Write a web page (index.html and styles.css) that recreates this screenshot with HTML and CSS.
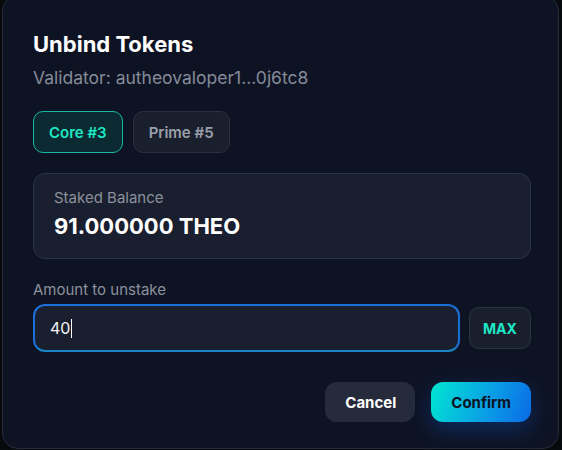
FILE: index.html
```html
<!DOCTYPE html>
<html lang="en">
<head>
    <meta charset="UTF-8">
    <meta name="viewport" content="width=device-width, initial-scale=1.0">
    <title>Unbind Tokens</title>
    <link rel="stylesheet" href="styles.css">
</head>
<body>
    <div class="modal">
        <h2 class="modal-title">Unbind Tokens</h2>
        <div class="modal-subtitle">Validator: autheovaloper1...0j6tc8</div>

        <div class="tabs">
            <button class="tab active">Core #3</button>
            <button class="tab">Prime #5</button>
        </div>

        <div class="balance-box">
            <div class="balance-label">Staked Balance</div>
            <div class="balance-value">91.000000 THEO</div>
        </div>

        <label class="field-label" for="amount">Amount to unstake</label>
        <div class="amount-row">
            <div class="amount-input">
                <span class="amount-text">40</span><span class="caret"></span>
            </div>
            <button class="max-btn">MAX</button>
        </div>

        <div class="actions">
            <button class="btn btn-cancel">Cancel</button>
            <button class="btn btn-confirm">Confirm</button>
        </div>
    </div>
</body>
</html>
```

FILE: styles.css
```css
body {
    margin: 0;
    height: 450px;
    overflow: hidden;
    background-color: #07090d;
    font-family: Inter, "Noto Sans", Arial, sans-serif;
}

.modal {
    box-sizing: border-box;
    width: 557px;
    height: 454px;
    margin: -5px 0 0 2px;
    padding: 34px 27px 0 30px;
    background-color: #0e1324;
    border: 1px solid #262c3b;
    border-radius: 16px;
    display: flex;
    flex-direction: column;
}

.modal-title {
    margin: 0;
    font-size: 22px;
    line-height: 28px;
    font-weight: 700;
    color: #ffffff;
}

.modal-subtitle {
    margin-top: 8px;
    font-size: 17.5px;
    line-height: 24px;
    color: #858b98;
}

.tabs {
    display: flex;
    gap: 10px;
    margin-top: 21px;
}

.tab {
    height: 42px;
    padding: 0 15px;
    font-family: inherit;
    font-size: 15px;
    font-weight: 600;
    border-radius: 10px;
    border: 1px solid #2a3040;
    background-color: #1a1f2e;
    color: #9aa0ab;
}

.tab.active {
    border-color: #17b9a3;
    background-color: #0b2a31;
    color: #1ee8c6;
}

.balance-box {
    margin-top: 20px;
    padding: 14px 20px 16px;
    background-color: #1a1f2f;
    border: 1px solid #2b3242;
    border-radius: 12px;
}

.balance-label {
    font-size: 15px;
    line-height: 20px;
    color: #8b919c;
    margin-bottom: 2px;
}

.balance-value {
    font-size: 22px;
    line-height: 32px;
    font-weight: 700;
    color: #ffffff;
}

.field-label {
    display: block;
    margin-top: 21px;
    margin-bottom: 4px;
    font-size: 15px;
    line-height: 20px;
    color: #8b919c;
}

.amount-row {
    display: flex;
    align-items: center;
    gap: 9px;
}

.amount-input {
    box-sizing: border-box;
    flex: 1;
    height: 48px;
    padding: 0 15px;
    display: flex;
    align-items: center;
    background-color: #1a1f2f;
    border: 2px solid #1b6fd8;
    border-bottom-color: #1a84c4;
    border-radius: 12px;
    font-size: 16px;
    color: #f2f4f7;
}

.caret {
    width: 1px;
    height: 19px;
    margin-left: 1px;
    background-color: #ffffff;
}

.max-btn {
    height: 42px;
    width: 62px;
    font-family: inherit;
    font-size: 14px;
    font-weight: 700;
    color: #1ee8c6;
    background-color: #1a1f2e;
    border: 1px solid #2b3242;
    border-radius: 10px;
}

.actions {
    display: flex;
    justify-content: flex-end;
    gap: 16px;
    margin-top: 30px;
}

.btn {
    height: 40px;
    padding: 0 20px;
    font-family: inherit;
    font-size: 15px;
    font-weight: 700;
    border: none;
    border-radius: 12px;
}

.btn-cancel {
    width: 90px;
    background-color: #252b3a;
    color: #ffffff;
}

.btn-confirm {
    background: linear-gradient(110deg, #00e6d2 0%, #0a9be6 60%, #0a6ae6 100%);
    color: #0b1222;
    box-shadow: 0 8px 22px rgba(10, 100, 230, 0.3);
}
```
